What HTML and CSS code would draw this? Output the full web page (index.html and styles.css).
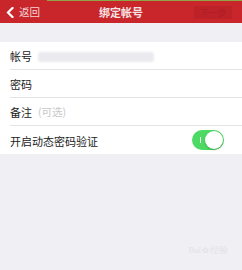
FILE: index.html
```html
<!DOCTYPE html>
<html lang="zh">
<head>
<meta charset="utf-8">
<link rel="stylesheet" href="styles.css">
</head>
<body>
<div class="topline"><span class="tl-red"></span><span class="tl-green"></span></div>
<header class="navbar">
  <div class="back">
    <svg class="chev" width="8" height="11" viewBox="0 0 8 11"><path d="M6.5 1 L2 5.5 L6.5 10" fill="none" stroke="#fff" stroke-width="2.2" stroke-linecap="square"/></svg>
    <span class="back-text">返回</span>
  </div>
  <div class="title">绑定帐号</div>
  <div class="next"><span class="next-btn">下一步</span></div>
</header>
<div class="list">
  <div class="row"><div class="row-inner"><span class="label">帐号</span><span class="blurred"></span></div></div>
  <div class="row"><div class="row-inner"><span class="label">密码</span></div></div>
  <div class="row"><div class="row-inner"><span class="label">备注</span><span class="ph">(可选)</span></div></div>
  <div class="row last"><div class="row-inner"><span class="label">开启动态密码验证</span><span class="toggle"><span class="on-mark"></span><span class="knob"></span></span></div></div>
</div>
<div class="footer"><span class="wm">Bai<span class="paw">✿</span>经验</span></div>
</body>
</html>
```

FILE: styles.css
```css
html, body {
  margin: 0;
  padding: 0;
}
body {
  width: 242px;
  height: 270px;
  background: #efeff4;
  font-family: "Noto Sans CJK SC", "Noto Sans", sans-serif;
  overflow: hidden;
}
.topline {
  display: flex;
  height: 1px;
}
.tl-red {
  width: 47px;
  background: #c9262c;
}
.tl-green {
  flex: 1;
  background: #8fa446;
}
.navbar {
  height: 22px;
  background: #c9262c;
  display: grid;
  grid-template-columns: 1fr auto 1fr;
  align-items: center;
  color: #fff;
}
.back {
  display: flex;
  align-items: center;
  padding-left: 6px;
  gap: 5px;
}
.chev {
  display: block;
}
.back-text {
  font-size: 10.5px;
  color: #f3d4d5;
  line-height: 1;
}
.title {
  font-size: 11px;
  font-weight: 700;
  color: #f6e4e4;
  line-height: 1;
}
.next {
  display: flex;
  justify-content: flex-end;
  padding-right: 10px;
}
.next-btn {
  display: block;
  width: 38px;
  height: 13px;
  background: #bd2228;
  color: #b01c22;
  font-size: 9px;
  line-height: 13px;
  text-align: center;
}
.list {
  margin-top: 19px;
  background: #fff;
}
.row {
  padding-left: 10px;
}
.row-inner {
  height: 27px;
  box-sizing: border-box;
  padding-top: 2px;
  border-bottom: 1px solid #e4e4e8;
  display: flex;
  align-items: center;
  padding-right: 18px;
}
.row.last .row-inner {
  border-bottom: none;
  height: 28px;
}
.row-inner {
  height: 28px;
}
.label {
  font-size: 11px;
  color: #222;
  line-height: 1;
}
.blurred {
  margin-left: 6px;
  width: 116px;
  height: 10px;
  background: #ebebef;
  border-radius: 2px;
  filter: blur(1px);
}
.ph {
  margin-left: 6px;
  font-size: 10.5px;
  color: #c8c8cc;
  line-height: 1;
}
.toggle {
  margin-left: auto;
  margin-top: -2px;
  width: 32px;
  height: 20px;
  border-radius: 10px;
  background: #4cd964;
  display: flex;
  align-items: center;
  justify-content: space-between;
  padding: 0 1px 0 8px;
  box-sizing: border-box;
}
.on-mark {
  width: 1px;
  height: 6px;
  background: #e8fbe9;
}
.knob {
  width: 18px;
  height: 18px;
  border-radius: 50%;
  background: #fff;
  box-shadow: 0 1px 2px rgba(0,0,0,0.25);
}
.footer {
  display: flex;
  justify-content: flex-end;
  padding: 90px 14px 0 0;
}
.wm {
  font-size: 9px;
  color: #e2e2e8;
  font-family: "Liberation Serif", serif;
}
.paw {
  font-size: 8px;
  margin: 0 1px;
}
```
